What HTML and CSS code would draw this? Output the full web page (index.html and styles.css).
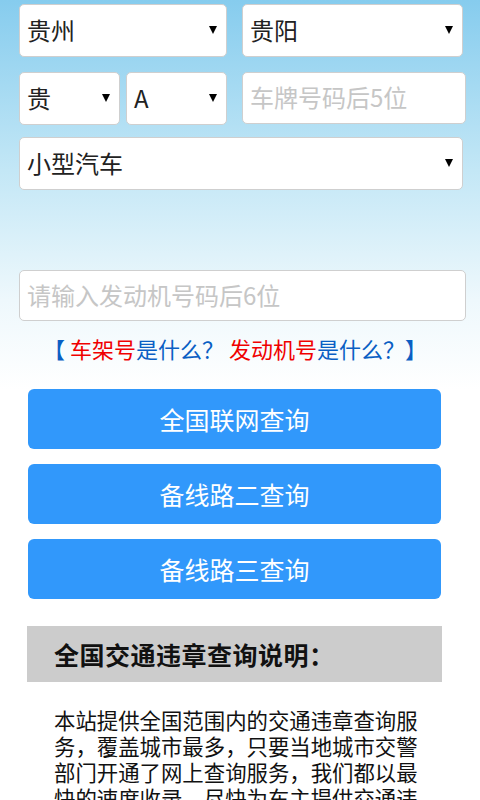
FILE: index.html
```html
<!DOCTYPE html>
<html lang="zh-CN">
<head>
<meta charset="utf-8">
<title>全国交通违章查询</title>
<link rel="stylesheet" href="styles.css">
</head>
<body>
<div class="page">
  <div class="form">
    <div class="row row-1">
      <div class="sel w-prov"><span class="val">贵州</span><span class="arrow"></span></div>
      <div class="sel w-city"><span class="val">贵阳</span><span class="arrow"></span></div>
    </div>
    <div class="row row-2">
      <div class="pair">
        <div class="sel w-half"><span class="val">贵</span><span class="arrow"></span></div>
        <div class="sel w-half"><span class="val">A</span><span class="arrow"></span></div>
      </div>
      <div class="inp w-plate"><span class="ph">车牌号码后5位</span></div>
    </div>
    <div class="sel w-type"><span class="val">小型汽车</span><span class="arrow"></span></div>
    <div class="inp w-engine"><span class="ph">请输入发动机号码后6位</span></div>
    <p class="help"><span class="blue">【 </span><span class="red">车架号</span><span class="blue">是什么？ </span><span class="red">发动机号</span><span class="blue">是什么？】</span></p>
  </div>
  <div class="buttons">
    <div class="btn">全国联网查询</div>
    <div class="btn">备线路二查询</div>
    <div class="btn">备线路三查询</div>
  </div>
  <div class="info">
    <h2 class="info-title">全国交通违章查询说明：</h2>
    <p class="info-text">本站提供全国范围内的交通违章查询服务，覆盖城市最多，只要当地城市交警部门开通了网上查询服务，我们都以最快的速度收录，尽快为车主提供交通违章查询服务，让车主及时了解违章信息。</p>
  </div>
</div>
</body>
</html>
```

FILE: styles.css
```css
html, body {
  margin: 0;
  padding: 0;
}
body {
  width: 480px;
  height: 800px;
  overflow: hidden;
  font-family: "Noto Sans CJK SC", "Noto Sans", sans-serif;
  background: linear-gradient(to bottom, #86ccee 0px, #c3e7f6 170px, #eef8fc 300px, #ffffff 390px, #ffffff 100%);
  background-repeat: no-repeat;
  color: #222;
}
.page {
  width: 480px;
}
.form {
  padding: 4px 0 0 19px;
}
.row {
  display: flex;
  gap: 15px;
}
.row-1 {
  margin-bottom: 15px;
}
.row-2 {
  margin-bottom: 12px;
}
.pair {
  display: flex;
  gap: 6px;
}
.sel, .inp {
  box-sizing: border-box;
  height: 53px;
  background: #fff;
  border: 1px solid #cfcfcf;
  border-radius: 5px;
  display: flex;
  align-items: center;
  padding: 0 9px 0 7px;
  font-size: 24px;
  color: #222;
}
.sel {
  justify-content: space-between;
}
.val {
  line-height: 1;
  margin-top: -2px;
}
.arrow {
  width: 0;
  height: 0;
  border-left: 4px solid transparent;
  border-right: 4px solid transparent;
  border-top: 8px solid #000;
  margin-top: -2px;
}
.w-prov { width: 208px; }
.w-city { width: 221px; }
.w-half { width: 101px; }
.w-plate { width: 224px; height: 52px; }
.w-type { width: 444px; }
.w-engine {
  width: 447px;
  height: 51px;
  margin-top: 80px;
}
.ph {
  color: #c6c6c6;
  line-height: 1;
  margin-top: -2px;
}
.help {
  margin: 13px 0 0 -19px;
  width: 470px;
  text-align: center;
  font-size: 22px;
  line-height: 28px;
}
.blue { color: #0a5fc4; }
.red { color: #f00000; }
.buttons {
  display: flex;
  flex-direction: column;
  gap: 15px;
  padding: 27px 0 0 28px;
}
.btn {
  width: 413px;
  height: 60px;
  box-sizing: border-box;
  background: #3198fb;
  border-radius: 6px;
  color: #fff;
  font-size: 25px;
  display: flex;
  align-items: center;
  justify-content: center;
}
.info {
  margin: 27px 0 0 27px;
  width: 415px;
}
.info-title {
  margin: 0;
  height: 56px;
  box-sizing: border-box;
  background: #cccccc;
  padding: 0 0 0 27px;
  display: flex;
  align-items: center;
  font-size: 25px;
  letter-spacing: 0.5px;
  font-weight: bold;
  color: #111;
}
.info-text {
  margin: 25px 0 0 0;
  padding: 0 23px 0 27px;
  font-size: 21.4px;
  line-height: 26px;
  color: #111;
}
```
